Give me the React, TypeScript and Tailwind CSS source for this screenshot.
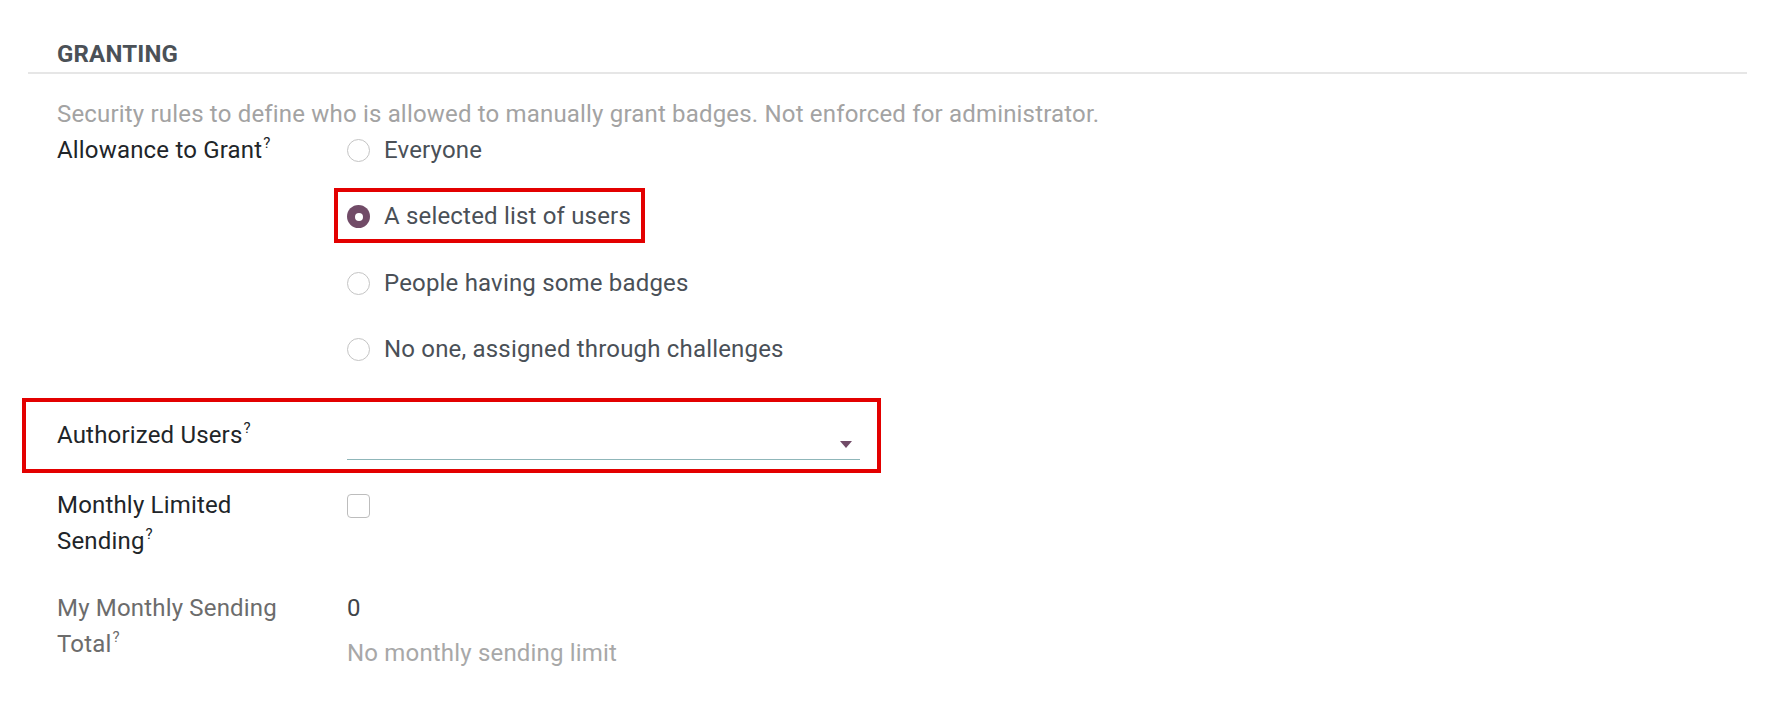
import React from "react";

function Q() {
  return <sup className="relative -top-[10px] ml-[1px] text-[15px] leading-none">?</sup>;
}

function Radio({ label, checked }: { label: string; checked?: boolean }) {
  return (
    <div className="flex h-[36px] items-center gap-[14px]">
      {checked ? (
        <span className="mt-[1px] flex h-[23px] w-[23px] items-center justify-center rounded-full bg-[#714b67]">
          <span className="h-[8px] w-[8px] rounded-full bg-white" />
        </span>
      ) : (
        <span className="mt-[1px] h-[23px] w-[23px] rounded-full border border-[#c4c4c4] bg-white" />
      )}
      <span className="text-[#4a5057]">{label}</span>
    </div>
  );
}

export default function App() {
  return (
    <div className="relative h-[714px] w-[1772px] overflow-hidden bg-white font-['Roboto',sans-serif] text-[24px] leading-[36px] tracking-[0.18px]">
      <div className="pt-[36px]">
        <div className="pl-[57px] text-[24px] font-bold uppercase leading-[36px] text-[#4b5157]">Granting</div>
        <div className="ml-[28px] h-[2px] w-[1719px] bg-[#e6e6e6]" />
        <div className="mt-[22px] pl-[57px] text-[#a3a3a3]">
          Security rules to define who is allowed to manually grant badges. Not enforced for administrator.
        </div>

        {/* Allowance to Grant */}
        <div className="mt-[-0.5px] flex pl-[57px]">
          <div className="w-[290px] shrink-0">
            <div className="max-w-[240px] text-[#212529]">
              Allowance to Grant
              <Q />
            </div>
          </div>
          <div className="flex flex-col gap-[30.5px]">
            <Radio label="Everyone" />
            <Radio label="A selected list of users" checked />
            <Radio label="People having some badges" />
            <Radio label="No one, assigned through challenges" />
          </div>
        </div>

        {/* Authorized Users */}
        <div className="mt-[50px] flex pl-[57px]">
          <div className="w-[290px] shrink-0">
            <div className="max-w-[240px] text-[#212529]">
              Authorized Users
              <Q />
            </div>
          </div>
          <div className="flex h-[42.5px] w-[513px] items-end justify-end border-b border-[#8fb6b9] pb-[11px] pr-[8px]">
            <svg width="12" height="7" viewBox="0 0 12 7">
              <polygon points="0,0 12,0 6,7" fill="#714b67" />
            </svg>
          </div>
        </div>

        {/* Monthly Limited Sending */}
        <div className="mt-[27px] flex pl-[57px]">
          <div className="w-[290px] shrink-0">
            <div className="max-w-[240px] text-[#212529]">
              Monthly Limited Sending
              <Q />
            </div>
          </div>
          <div className="pt-[7px]">
            <div className="h-[24px] w-[23px] rounded-[4px] border border-[#bdbdbd] bg-white" />
          </div>
        </div>

        {/* My Monthly Sending Total */}
        <div className="mt-[31.5px] flex pl-[57px]">
          <div className="w-[290px] shrink-0">
            <div className="max-w-[240px] text-[#6c6c6c]">
              My Monthly Sending Total
              <Q />
            </div>
          </div>
          <div className="flex flex-col">
            <div className="text-[#3f4449]">0</div>
            <div className="mt-[8.5px] text-[#a8a8a8]">No monthly sending limit</div>
          </div>
        </div>
      </div>

      {/* annotation highlights */}
      <div className="pointer-events-none absolute left-[334px] top-[188px] h-[55px] w-[311px] border-[4px] border-[#e30000]" />
      <div className="pointer-events-none absolute left-[22px] top-[398px] h-[75px] w-[859px] border-[4px] border-[#e30000]" />
    </div>
  );
}
